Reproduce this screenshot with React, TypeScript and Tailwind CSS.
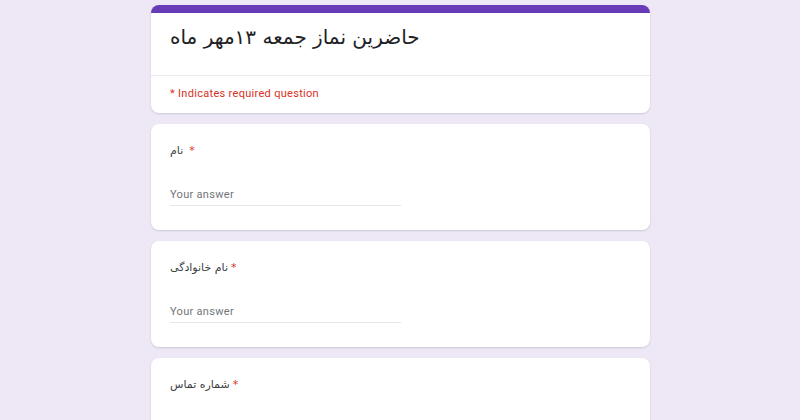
const questions = [
  { id: 'name', label: 'نام', spaced: true },
  { id: 'family', label: 'نام خانوادگی', spaced: false },
  { id: 'phone', label: 'شماره تماس', spaced: false },
];

function QuestionCard({ label, spaced }: { label: string; spaced: boolean }) {
  return (
    <div className="bg-white rounded-lg shadow-[0_1px_2px_rgba(60,64,67,0.18)] px-[19px] pt-[19px] pb-[24px]">
      <div className="h-[16px] flex items-center text-[11px] text-[#3c4043] font-['DejaVu_Sans',sans-serif]">
        <span>{label}</span>
        <span className={`text-[#d93025] ${spaced ? 'ml-[6px]' : 'ml-[3px]'}`}>*</span>
      </div>
      <div className="mt-[28px] w-[231px] border-b border-[#e6e6e6] pb-[2px] text-[11px] leading-[16px]">
        <span className="tracking-[0.3px] text-[#70757a] font-['Roboto',sans-serif]">Your answer</span>
      </div>
    </div>
  );
}

export default function App() {
  return (
    <div className="w-[800px] h-[420px] overflow-hidden bg-[#ede7f6] font-['Roboto',sans-serif]">
      <div className="w-[499px] ml-[151px] pt-[5px] flex flex-col gap-[11px]">
        {/* Header card */}
        <div className="bg-white rounded-lg overflow-hidden shadow-[0_1px_2px_rgba(60,64,67,0.18)]">
          <div className="h-[8px] bg-[#673ab7]" />
          <div className="h-[63px] px-[19px] flex items-center border-b border-[#e8e8ee]">
            <h1 className="text-[20px] text-[#202124] font-['DejaVu_Sans',sans-serif] -mt-[14px]">
              حاضرین نماز جمعه ۱۳مهر ماه
            </h1>
          </div>
          <div className="h-[37px] px-[19px] flex items-center">
            <span className="text-[11px] tracking-[0.3px] text-[#d93025]">* Indicates required question</span>
          </div>
        </div>

        {questions.map(q => (
          <QuestionCard key={q.id} label={q.label} spaced={q.spaced} />
        ))}
      </div>
    </div>
  );
}
